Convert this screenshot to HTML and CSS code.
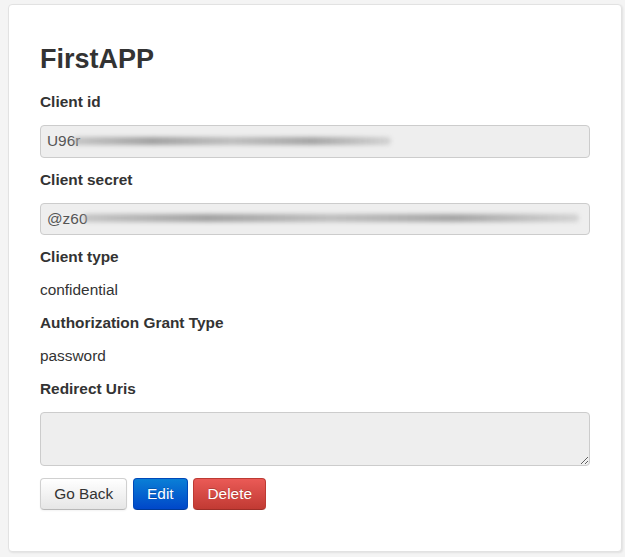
FILE: index.html
```html
<!DOCTYPE html>
<html lang="en">
<head>
<meta charset="utf-8">
<title>FirstAPP</title>
<link rel="stylesheet" href="styles.css">
</head>
<body>
<div class="page">
  <main class="card">
    <h2 class="title">FirstAPP</h2>
    <label class="label">Client id</label>
    <div class="field"><span class="field-text">U96r</span><span class="smudge smudge-short"></span></div>
    <label class="label">Client secret</label>
    <div class="field"><span class="field-text">@z60</span><span class="smudge smudge-long"></span></div>
    <label class="label">Client type</label>
    <p class="value">confidential</p>
    <label class="label">Authorization Grant Type</label>
    <p class="value">password</p>
    <label class="label">Redirect Uris</label>
    <textarea class="area" readonly></textarea>
    <div class="actions">
      <button class="btn btn-default" type="button">Go Back</button>
      <button class="btn btn-primary" type="button">Edit</button>
      <button class="btn btn-danger" type="button">Delete</button>
    </div>
  </main>
</div>
</body>
</html>
```
FILE: styles.css
```css
* { box-sizing: border-box; }
html, body { margin: 0; padding: 0; }
body {
  background: #f4f4f4;
  font-family: "Liberation Sans", Arial, sans-serif;
  color: #333;
  font-size: 15.4px;
  line-height: 20px;
}
.page {
  padding: 4px 3px 5px 8px;
}
.card {
  display: flex;
  flex-direction: column;
  align-items: stretch;
  width: 614px;
  height: 548px;
  background: #fff;
  border: 1px solid #e2e2e2;
  border-radius: 4px;
  box-shadow: 1px 1px 2px rgba(0,0,0,0.08);
  padding: 31px 31px 0 31px;
}
.title {
  margin: 8px 0 18px;
  font-size: 27px;
  line-height: 30px;
  font-weight: bold;
  color: #333;
}
.label {
  display: block;
  font-weight: bold;
  font-size: 15.4px;
  line-height: 20px;
  margin: 0 0 13px;
  color: #333;
}
.value {
  margin: 0 0 13px;
  font-size: 15.4px;
  line-height: 20px;
  color: #333;
}
.field {
  display: flex;
  align-items: center;
  height: 32.5px;
  margin-bottom: 12px;
  padding: 0 6px;
  background: #eeeeee;
  border: 1px solid #cccccc;
  border-radius: 4px;
  color: #555;
  font-size: 15.4px;
  overflow: hidden;
  white-space: nowrap;
}
.field-text { flex: none; }
.smudge {
  flex: none;
  height: 8px;
  margin-left: -7px;
  margin-top: -1px;
  border-radius: 4px;
  background: linear-gradient(90deg, rgba(170,170,170,0.6), rgba(135,135,135,0.75) 25%, rgba(170,170,170,0.7) 50%, rgba(140,140,140,0.75) 75%, rgba(185,185,185,0.5));
  filter: blur(2px);
}
.smudge-short { width: 318px; }
.smudge-long { width: 496px; margin-left: -4px; }
.area {
  display: block;
  width: 100%;
  height: 54px;
  margin: 0 0 11.5px;
  background: #eeeeee;
  border: 1px solid #cccccc;
  border-radius: 4px;
  resize: vertical;
  font-family: inherit;
  font-size: 15.4px;
}
.actions {
  display: flex;
  gap: 5.5px;
}
.btn {
  font-family: "Liberation Sans", Arial, sans-serif;
  font-size: 15.4px;
  line-height: 20px;
  padding: 5px 13.2px;
  border-radius: 4px;
  border: 1px solid;
  cursor: pointer;
}
.btn-default {
  color: #333;
  background: linear-gradient(#ffffff, #e6e6e6);
  border-color: #d0d0d0 #d0d0d0 #b8b8b8;
  box-shadow: inset 0 1px 0 rgba(255,255,255,0.2), 0 1px 2px rgba(0,0,0,0.05);
}
.btn-primary {
  color: #fff;
  background: linear-gradient(#0a7fd6, #0047c9);
  border-color: #0048b8 #0048b8 #003a99;
  text-shadow: 0 -1px 0 rgba(0,0,0,0.2);
}
.btn-danger {
  color: #fff;
  background: linear-gradient(#ea5a56, #c13a33);
  border-color: #bd3a33 #bd3a33 #9e2e28;
  text-shadow: 0 -1px 0 rgba(0,0,0,0.2);
}
```
